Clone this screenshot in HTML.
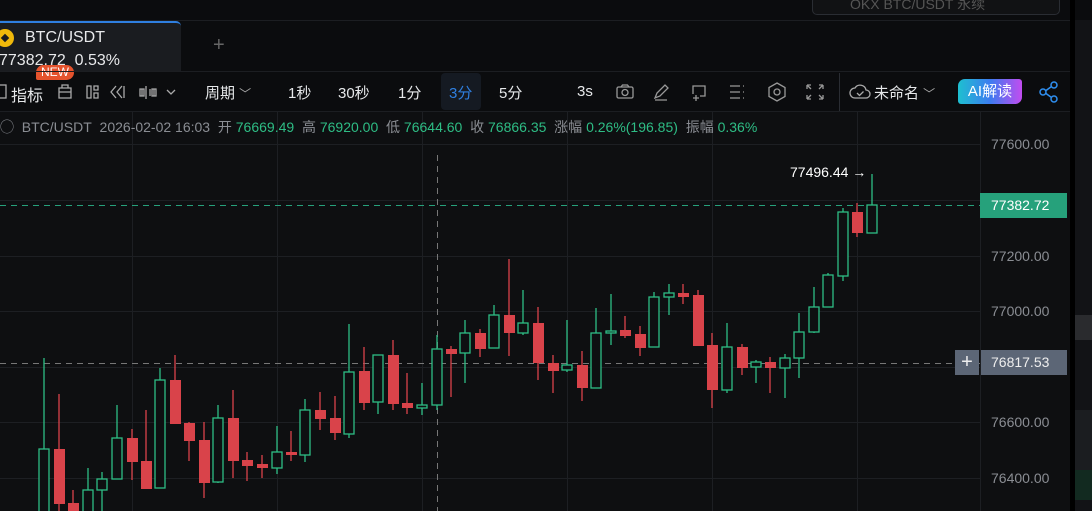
<!DOCTYPE html>
<html><head><meta charset="utf-8"><style>
*{margin:0;padding:0;box-sizing:border-box}
body{width:1092px;height:511px;overflow:hidden;background:#0b0c0e;font-family:"Liberation Sans","Noto Sans CJK SC",sans-serif;color:#d1d4dc;position:relative}
.abs{position:absolute;white-space:nowrap}
.tb{font-size:15px;color:#e6e8ea}
.g{color:#2ebd85}.m{color:#8a8d93}
</style></head><body>
<!-- top bar -->
<div class="abs" style="left:812px;top:-4px;width:248px;height:19px;border:1px solid #2a2d33;border-radius:5px;background:#111214"></div>
<div class="abs" style="left:850px;top:-6px;font-size:14px;color:#555">OKX BTC/USDT 永续</div>
<div class="abs" style="left:0;top:20px;width:1070px;height:1px;background:#1c1e22"></div>
<!-- tab -->
<div class="abs" style="left:0;top:21px;width:181px;height:51px;background:#1a1c20;border-top:2px solid #2f7fe0;border-radius:0 5px 0 0"></div>
<div class="abs" style="left:-4px;top:29px;width:18px;height:18px;border-radius:50%;background:#f0b90b"></div>
<div class="abs" style="left:2px;top:35px;width:6px;height:6px;background:#1a1c20;transform:rotate(45deg)"></div>
<div class="abs" style="left:25px;top:29px;font-size:16px;color:#e8e9eb">BTC/USDT</div>
<div class="abs" style="left:-1px;top:52px;font-size:16px;color:#e8e9eb">77382.72&nbsp;&nbsp;0.53%</div>
<div class="abs" style="left:213px;top:34px;font-size:20px;color:#666">+</div>
<div class="abs" style="left:36px;top:65px;width:38px;height:15px;background:#e5532d;border-radius:8px 8px 8px 2px;font-size:12px;color:#fff;text-align:center;line-height:15px">NEW</div>
<div class="abs" style="left:0;top:71px;width:1070px;height:1px;background:#1c1e22"></div>
<!-- toolbar -->
<svg class="abs" style="left:0;top:80px" width="190" height="24" fill="none" stroke="#aaa" stroke-width="1.3">
<rect x="-4" y="5" width="10" height="13"/>
<path d="M59 8h12v10h-12zM59 12h12M62 8v-3h6v3"/>
<path d="M87 6h4v12h-4zM94 6h4v4h-4zM94 13h4v5h-4z"/>
<path d="M116 6l-5 6 5 6M122 6l-5 6 5 6M124 6v12"/>
<path d="M142 9v7M146 6v13M150 9v7M154 9v7M140 9h4v7h-4zM152 9h4v7h-4z"/>
<path d="M167 10l4 4 4-4"/>
</svg>
<div class="abs tb" style="left:11px;top:82px;font-size:16px">指标</div>
<div class="abs tb" style="left:205px;top:82px">周期 <span style="font-size:12px;color:#aaa">﹀</span></div>
<div class="abs tb" style="left:288px;top:82px">1秒</div>
<div class="abs tb" style="left:338px;top:82px">30秒</div>
<div class="abs tb" style="left:398px;top:82px">1分</div>
<div class="abs" style="left:441px;top:73px;width:40px;height:37px;background:#151a22;border-radius:4px"></div>
<div class="abs tb" style="left:449px;top:82px;color:#2f7fe0">3分</div>
<div class="abs tb" style="left:499px;top:82px">5分</div>
<div class="abs tb" style="left:577px;top:83px">3s</div>
<svg class="abs" style="left:610px;top:80px" width="220" height="24" fill="none" stroke="#999" stroke-width="1.3">
<rect x="7" y="7" width="16" height="11" rx="1.5"/><path d="M11 7l1.5-2h5l1.5 2"/><circle cx="15" cy="12.5" r="3"/>
<path d="M45 18l2-5 8-8 3 3-8 8zM45 20h12"/>
<path d="M83 14v-8h12v10h-5M83 18h6M86 15v6"/>
<path d="M120 6h10M120 12h10M120 18h10M133 6h1M133 12h1M133 18h1"/>
<path d="M167 3l8 4.5v9l-8 4.5-8-4.5v-9z"/><circle cx="167" cy="12" r="3"/>
<path d="M197 5l4 4M197 5v4M197 5h4M213 5l-4 4M213 5v4M213 5h-4M197 19l4-4M197 19v-4M197 19h4M213 19l-4-4M213 19v-4M213 19h-4"/>
</svg>
<div class="abs" style="left:839px;top:73px;width:1px;height:38px;background:#2a2d33"></div>
<svg class="abs" style="left:849px;top:82px" width="22" height="18" fill="none" stroke="#aaa" stroke-width="1.3"><path d="M6 16a5 5 0 0 1 0-10 6 6 0 0 1 11 2 4 4 0 0 1 0 8z"/><path d="M8 11l2.5 2.5 4-4"/></svg>
<div class="abs tb" style="left:874px;top:82px">未命名 <span style="font-size:12px;color:#aaa">﹀</span></div>
<div class="abs" style="left:958px;top:79px;width:64px;height:25px;border-radius:7px 3px 7px 3px;background:linear-gradient(90deg,#1ec0d0,#3c7cf0,#c24cf0);font-size:15px;color:#fff;text-align:center;line-height:25px">AI解读</div>
<svg class="abs" style="left:1038px;top:81px" width="22" height="22" fill="none" stroke="#2f8ff0" stroke-width="1.5"><circle cx="16" cy="4" r="3"/><circle cx="5" cy="11" r="3"/><circle cx="16" cy="18" r="3"/><path d="M8 9.5l5.5-4M8 12.5l5.5 4"/></svg>
<div class="abs" style="left:0;top:111px;width:1070px;height:1px;background:#1c1e22"></div>
<!-- chart -->
<div class="abs" style="left:0;top:112px;width:1070px;height:399px;background:#0e0f11"></div>
<div class="abs" style="left:1070px;top:0;width:5px;height:511px;background:#000"></div>
<div class="abs" style="left:1075px;top:20px;width:17px;height:491px;background:#121316"></div>
<div class="abs" style="left:1075px;top:315px;width:17px;height:25px;background:#2a2b2e"></div>
<div class="abs" style="left:1075px;top:410px;width:17px;height:60px;background:#1b1d20"></div>
<div class="abs" style="left:1075px;top:470px;width:17px;height:30px;background:#122a20"></div>
<svg class="abs" style="left:0;top:0" width="1070" height="511">
<g stroke="#1d1f23" stroke-width="1">
<path d="M0 144.5H980M0 200.5H980M0 256.5H980M0 311.5H980M0 367.5H980M0 422.5H980M0 478.5H980"/>
<path d="M132.5 112V511M277.5 112V511M422.5 112V511M567.5 112V511M712.5 112V511M857.5 112V511M980.5 112V511"/>
</g>
<path d="M0 205.5H980" stroke="#26a17b" stroke-dasharray="6 5"/>
<path d="M0 363.5H980" stroke="#777" stroke-dasharray="6 5"/>
<path d="M437.5 155V511" stroke="#777" stroke-dasharray="6 5"/>
</svg>
<svg class="abs" style="left:0;top:0" width="1070" height="511">
<g stroke="#2ebd85" stroke-width="1.3" fill="#0e0f11">
<path d="M44 358V515M88 468V515M102 472V515M117 405V479M160 368V488M218 405V483M277 426V474M305 399V462M349 324V438M378 355V414M422 383V415M437 335V410M465 320V383M494 305V348M523 290V335M567 320V372M596 308V388M611 294V345M654 292V347M669 284V315M727 323V393M756 360V383M785 354V398M799 313V378M814 287V333M828 273V307M843 208V281M872 174V233"/>
<rect x="39" y="449" width="10" height="70"/><rect x="83" y="490" width="10" height="30"/><rect x="97" y="479" width="10" height="11"/><rect x="112" y="438" width="10" height="41"/><rect x="155" y="380" width="10" height="108"/><rect x="213" y="418" width="10" height="64"/><rect x="272" y="452" width="10" height="16"/><rect x="300" y="410" width="10" height="45"/><rect x="344" y="372" width="10" height="62"/><rect x="373" y="355" width="10" height="47"/><rect x="417" y="405" width="10" height="3"/><rect x="432" y="349" width="10" height="56"/><rect x="460" y="333" width="10" height="20"/><rect x="489" y="315" width="10" height="33"/><rect x="518" y="323" width="10" height="10"/><rect x="562" y="365" width="10" height="5"/><rect x="591" y="333" width="10" height="55"/><rect x="606" y="331" width="10" height="2"/><rect x="649" y="297" width="10" height="50"/><rect x="664" y="293" width="10" height="4"/><rect x="722" y="347" width="10" height="43"/><rect x="751" y="362" width="10" height="5"/><rect x="780" y="358" width="10" height="10"/><rect x="794" y="332" width="10" height="26"/><rect x="809" y="307" width="10" height="25"/><rect x="823" y="275" width="10" height="32"/><rect x="838" y="212" width="10" height="64"/><rect x="867" y="205" width="10" height="28"/>
</g>
<g stroke="#d9434a" stroke-width="1.3" fill="#d9434a">
<path d="M59 394V515M73 490V515M132 429V480M146 410V489M175 355V424M189 422V461M204 422V498M233 390V478M247 452V481M262 455V478M291 431V461M320 392V430M335 396V440M364 347V410M393 340V410M407 373V414M451 346V397M480 329V357M509 259V356M538 307V380M553 355V393M582 351V401M625 316V338M640 326V356M683 284V304M698 290V346M712 333V408M742 344V375M770 357V393M857 203V237"/>
<rect x="54" y="449" width="11" height="55" stroke="none"/><rect x="68" y="503" width="11" height="12" stroke="none"/><rect x="127" y="438" width="11" height="24" stroke="none"/><rect x="141" y="461" width="11" height="28" stroke="none"/><rect x="170" y="380" width="11" height="44" stroke="none"/><rect x="184" y="423" width="11" height="18" stroke="none"/><rect x="199" y="440" width="11" height="43" stroke="none"/><rect x="228" y="418" width="11" height="43" stroke="none"/><rect x="242" y="460" width="11" height="6" stroke="none"/><rect x="257" y="464" width="11" height="4" stroke="none"/><rect x="286" y="452" width="11" height="3" stroke="none"/><rect x="315" y="410" width="11" height="9" stroke="none"/><rect x="330" y="418" width="11" height="15" stroke="none"/><rect x="359" y="371" width="11" height="32" stroke="none"/><rect x="388" y="355" width="11" height="49" stroke="none"/><rect x="402" y="403" width="11" height="5" stroke="none"/><rect x="446" y="349" width="11" height="5" stroke="none"/><rect x="475" y="333" width="11" height="16" stroke="none"/><rect x="504" y="315" width="11" height="18" stroke="none"/><rect x="533" y="323" width="11" height="40" stroke="none"/><rect x="548" y="363" width="11" height="8" stroke="none"/><rect x="577" y="365" width="11" height="23" stroke="none"/><rect x="620" y="330" width="11" height="6" stroke="none"/><rect x="635" y="334" width="11" height="14" stroke="none"/><rect x="678" y="293" width="11" height="4" stroke="none"/><rect x="693" y="295" width="11" height="51" stroke="none"/><rect x="707" y="345" width="11" height="45" stroke="none"/><rect x="737" y="347" width="11" height="21" stroke="none"/><rect x="765" y="362" width="11" height="6" stroke="none"/><rect x="852" y="212" width="11" height="21" stroke="none"/>
</g>
</svg>
<!-- info line -->
<div class="abs" style="left:0;top:117px;font-size:14px;color:#8a8d93">◯&nbsp; BTC/USDT&nbsp; 2026-02-02 16:03&nbsp; 开 <span class="g">76669.49</span>&nbsp; 高 <span class="g">76920.00</span>&nbsp; 低 <span class="g">76644.60</span>&nbsp; 收 <span class="g">76866.35</span>&nbsp; 涨幅 <span class="g">0.26%(196.85)</span>&nbsp; 振幅 <span class="g">0.36%</span></div>
<div class="abs" style="left:790px;top:164px;font-size:14px;color:#fff">77496.44 →</div>
<!-- axis labels -->
<div class="abs m" style="left:991px;top:136px;font-size:14px">77600.00</div>
<div class="abs" style="left:980px;top:193px;width:87px;height:25px;background:#26a17b;color:#fff;font-size:14px;line-height:25px;padding-left:11px">77382.72</div>
<div class="abs m" style="left:991px;top:248px;font-size:14px">77200.00</div>
<div class="abs m" style="left:991px;top:303px;font-size:14px">77000.00</div>
<div class="abs" style="left:955px;top:350px;width:24px;height:25px;background:#5c6676;color:#eee;font-size:20px;line-height:24px;text-align:center">+</div>
<div class="abs" style="left:981px;top:350px;width:86px;height:25px;background:#5c6676;color:#eee;font-size:14px;line-height:25px;padding-left:10px">76817.53</div>
<div class="abs m" style="left:991px;top:414px;font-size:14px">76600.00</div>
<div class="abs m" style="left:991px;top:470px;font-size:14px">76400.00</div>
</body></html>
